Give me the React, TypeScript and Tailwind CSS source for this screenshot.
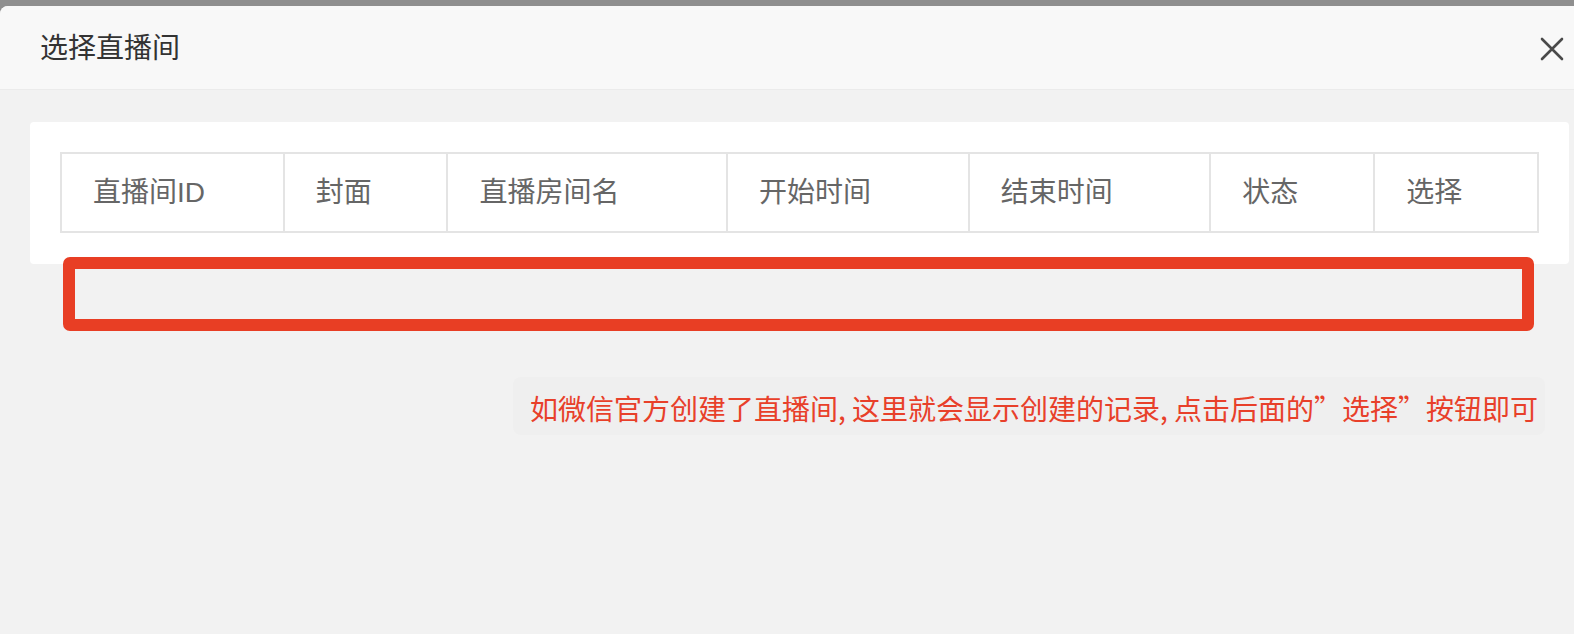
const cols = [
  { label: "直播间ID", w: "w-[223px]" },
  { label: "封面", w: "w-[164px]" },
  { label: "直播房间名", w: "w-[280px]" },
  { label: "开始时间", w: "w-[242px]" },
  { label: "结束时间", w: "w-[242px]" },
  { label: "状态", w: "w-[164px]" },
  { label: "选择", w: "w-[164px]" },
];

export default function App() {
  return (
    <div
      className="relative w-[1574px] h-[634px] overflow-hidden bg-[#8f8f8f] pt-[6px]"
      style={{ fontFamily: '"Liberation Sans", "Noto Sans CJK SC", sans-serif' }}
    >
      <div className="flex flex-col h-full bg-[#f2f2f2] rounded-tl-[8px] overflow-hidden">
        {/* Header */}
        <div className="flex items-center justify-between h-[84px] bg-[#f8f8f8] border-b border-[#ebebeb] pl-[40px] pr-[10px]">
          <h2 className="text-[28px] text-[#333] leading-none pt-[3px]">选择直播间</h2>
          <button className="w-[24px] h-[24px] flex items-center justify-center mt-[3px]">
            <svg width="24" height="24" viewBox="0 0 24 24" fill="none" stroke="#4a4a4a" strokeWidth="2.6" strokeLinecap="round">
              <path d="M2 2L22 22M22 2L2 22" />
            </svg>
          </button>
        </div>

        {/* Body */}
        <div className="pl-[30px] pr-[5px] pt-[32px]">
          <div className="bg-white rounded-[4px] p-[30px] pb-[31px]">
            <table className="border-collapse border-2 border-[#e4e4e4]">
              <thead>
                <tr className="h-[79px]">
                  {cols.map((c) => (
                    <th
                      key={c.label}
                      className={`${c.w} border-2 border-[#e4e4e4] text-left font-normal text-[28px] text-[#666] pl-[31px]`}
                    >
                      {c.label}
                    </th>
                  ))}
                </tr>
              </thead>
            </table>
          </div>

          <div className="flex justify-end pr-[24px] mt-[113px]">
            <div className="w-[1032px] h-[58px] flex items-center bg-[#efefef] rounded-[8px] px-[17px] pt-[3px]">
              <p
                className="text-[28px] text-[#e8402a] leading-none whitespace-nowrap"
                style={{ fontFamily: '"Noto Sans CJK SC", sans-serif' }}
              >
                如微信官方创建了直播间, 这里就会显示创建的记录, 点击后面的”选择”按钮即可
              </p>
            </div>
          </div>
        </div>
      </div>

      {/* annotation frame */}
      <div className="absolute left-[63px] top-[257px] w-[1471px] h-[74px] border-[12px] border-[#e83e24] rounded-[7px]" />
    </div>
  );
}
